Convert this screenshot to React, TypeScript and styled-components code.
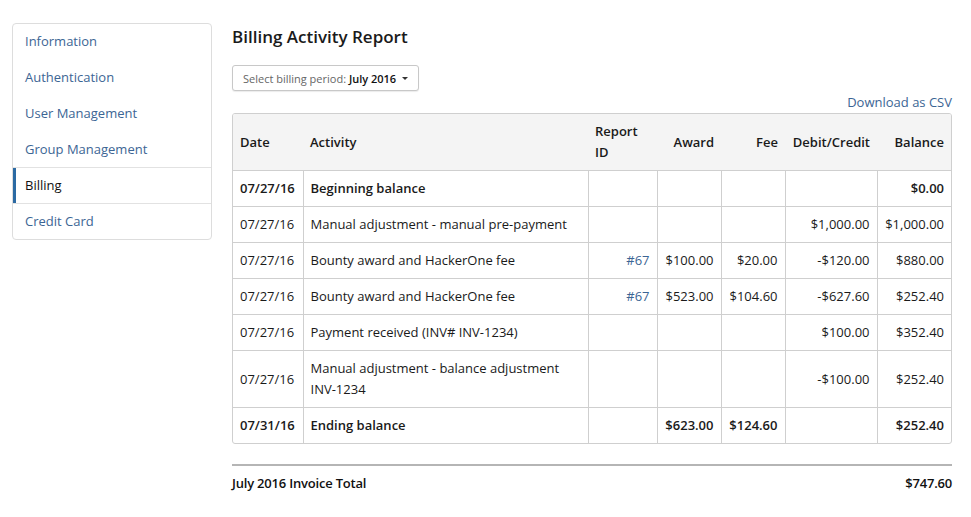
import React from "react";
import styled, { createGlobalStyle } from "styled-components";

const Global = createGlobalStyle`
  html, body { margin: 0; padding: 0; background: #fff; }
  body { font-family: "Open Sans", "Noto Sans", sans-serif; color: #222; font-size: 13px; }
`;

const Page = styled.div`
  display: flex;
  align-items: flex-start;
  gap: 20px;
  padding: 23px 19px 0 12px;
`;

const Sidebar = styled.nav`
  width: 198px;
  flex: none;
  border: 1px solid #ddd;
  border-radius: 4px;
  display: flex;
  flex-direction: column;
  overflow: hidden;
`;

const NavItem = styled.a<{ $active?: boolean; $separated?: boolean }>`
  display: flex;
  align-items: center;
  height: 34.75px;
  padding: 0 12px 1px;
  font-size: 13px;
  text-decoration: none;
  color: ${(p) => (p.$active ? "#111" : "#3c6594")};
  border-top: ${(p) => (p.$separated ? "1px solid #e2e2e2" : "none")};
  box-shadow: ${(p) => (p.$active ? "inset 3px 0 0 #2c6aa3" : "none")};
  box-sizing: content-box;
  &:nth-child(5), &:nth-child(6) { height: 34px; }
`;

const Main = styled.main`
  flex: 1;
  min-width: 0;
  display: flex;
  flex-direction: column;
`;

const Title = styled.h1`
  margin: 2px 0 0;
  font-size: 17px;
  line-height: 24px;
  font-weight: 600;
  color: #1a1a1a;
`;

const Dropdown = styled.button`
  align-self: flex-start;
  margin-top: 16px;
  height: 26px;
  padding: 0 10px;
  display: flex;
  align-items: center;
  gap: 6px;
  border: 1px solid #c8c8c8;
  border-radius: 3px;
  background: #fff;
  box-shadow: 0 1px 1px rgba(0, 0, 0, 0.08);
  font-family: inherit;
  font-size: 11px;
  color: #666;
`;

const Strong = styled.strong`
  color: #111;
  font-weight: 600;
`;

const Caret = styled.span`
  width: 0;
  height: 0;
  border-left: 3px solid transparent;
  border-right: 3px solid transparent;
  border-top: 3px solid #333;
`;

const CsvLink = styled.a`
  align-self: flex-end;
  margin-top: 1px;
  line-height: 20px;
  font-size: 13px;
  color: #3c6594;
  text-decoration: none;
`;

const TableWrap = styled.div`
  margin-top: 1px;
  border: 1px solid #cfcfcf;
  border-radius: 3px;
  overflow: hidden;
`;

const Table = styled.table`
  width: 100%;
  table-layout: fixed;
  border-collapse: collapse;
  font-size: 13px;
  line-height: 21px;
`;

const Col = styled.col<{ $w: number }>`
  width: ${(p) => p.$w}px;
`;

const Th = styled.th<{ $align?: string }>`
  background: #f4f4f4;
  font-weight: 600;
  text-align: ${(p) => p.$align || "left"};
  padding: 7px 7px;
  height: 42px;
  color: #1a1a1a;
  border-bottom: 1px solid #cfcfcf;
`;

const Td = styled.td<{ $align?: string; $bold?: boolean }>`
  text-align: ${(p) => p.$align || "left"};
  font-weight: ${(p) => (p.$bold ? 600 : 400)};
  padding: 7px 7px;
  border: 1px solid #cfcfcf;
  color: #1a1a1a;
  &:first-child { border-left: none; }
  &:last-child { border-right: none; }
`;

const Row = styled.tr`
  &:last-child td { border-bottom: none; }
`;

const IdLink = styled.a`
  color: #3c6594;
  text-decoration: none;
`;

const TotalBar = styled.div`
  margin-top: 20px;
  border-top: 2px solid #b5b5b5;
  display: flex;
  justify-content: space-between;
  padding-top: 7px;
  font-weight: 600;
  font-size: 13px;
  line-height: 20px;
  color: #111;
  letter-spacing: -0.2px;
`;

type R = {
  date: string;
  act: string;
  id?: string;
  award?: string;
  fee?: string;
  dc?: string;
  bal: string;
  bold?: boolean;
};

const rows: R[] = [
  { date: "07/27/16", act: "Beginning balance", bal: "$0.00", bold: true },
  { date: "07/27/16", act: "Manual adjustment - manual pre-payment", dc: "$1,000.00", bal: "$1,000.00" },
  { date: "07/27/16", act: "Bounty award and HackerOne fee", id: "#67", award: "$100.00", fee: "$20.00", dc: "-$120.00", bal: "$880.00" },
  { date: "07/27/16", act: "Bounty award and HackerOne fee", id: "#67", award: "$523.00", fee: "$104.60", dc: "-$627.60", bal: "$252.40" },
  { date: "07/27/16", act: "Payment received (INV# INV-1234)", dc: "$100.00", bal: "$352.40" },
  { date: "07/27/16", act: "Manual adjustment - balance adjustment INV-1234", dc: "-$100.00", bal: "$252.40" },
  { date: "07/31/16", act: "Ending balance", award: "$623.00", fee: "$124.60", bal: "$252.40", bold: true },
];

const widths = [70, 285, 69, 64, 64, 92, 74];

export default function App() {
  return (
    <>
      <Global />
      <Page>
        <Sidebar>
          <NavItem>Information</NavItem>
          <NavItem>Authentication</NavItem>
          <NavItem>User Management</NavItem>
          <NavItem>Group Management</NavItem>
          <NavItem $active $separated>Billing</NavItem>
          <NavItem $separated>Credit Card</NavItem>
        </Sidebar>
        <Main>
          <Title>Billing Activity Report</Title>
          <Dropdown>
            <span>
              Select billing period: <Strong>July 2016</Strong>
            </span>
            <Caret />
          </Dropdown>
          <CsvLink>Download as CSV</CsvLink>
          <TableWrap>
            <Table>
              <colgroup>
                {widths.map((w, i) => (
                  <Col key={i} $w={w} />
                ))}
              </colgroup>
              <thead>
                <tr>
                  <Th>Date</Th>
                  <Th>Activity</Th>
                  <Th>Report ID</Th>
                  <Th $align="right">Award</Th>
                  <Th $align="right">Fee</Th>
                  <Th $align="right">Debit/Credit</Th>
                  <Th $align="right">Balance</Th>
                </tr>
              </thead>
              <tbody>
                {rows.map((r, i) => (
                  <Row key={i}>
                    <Td $bold={r.bold}>{r.date}</Td>
                    <Td $bold={r.bold}>{r.act}</Td>
                    <Td $align="right">{r.id && <IdLink>{r.id}</IdLink>}</Td>
                    <Td $align="right" $bold={r.bold}>{r.award}</Td>
                    <Td $align="right" $bold={r.bold}>{r.fee}</Td>
                    <Td $align="right" $bold={r.bold}>{r.dc}</Td>
                    <Td $align="right" $bold={r.bold}>{r.bal}</Td>
                  </Row>
                ))}
              </tbody>
            </Table>
          </TableWrap>
          <TotalBar>
            <span>July 2016 Invoice Total</span>
            <span>$747.60</span>
          </TotalBar>
        </Main>
      </Page>
    </>
  );
}
